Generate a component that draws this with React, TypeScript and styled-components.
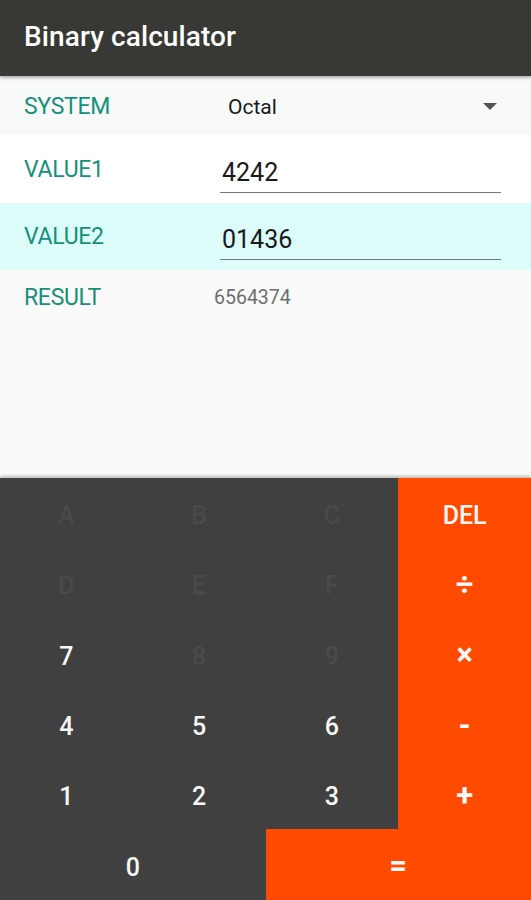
import styled, { createGlobalStyle } from "styled-components";

const GlobalStyle = createGlobalStyle`
  html, body {
    margin: 0;
    padding: 0;
    background: #fafafa;
    font-family: Roboto, "Noto Sans", "Liberation Sans", sans-serif;
  }
`;

type KeyKind = "num" | "off" | "op" | "sym";
type KeyDef = { label: string; kind: KeyKind; span?: number };

const keys: KeyDef[] = [
  { label: "A", kind: "off" },
  { label: "B", kind: "off" },
  { label: "C", kind: "off" },
  { label: "DEL", kind: "op" },
  { label: "D", kind: "off" },
  { label: "E", kind: "off" },
  { label: "F", kind: "off" },
  { label: "÷", kind: "sym" },
  { label: "7", kind: "num" },
  { label: "8", kind: "off" },
  { label: "9", kind: "off" },
  { label: "×", kind: "sym" },
  { label: "4", kind: "num" },
  { label: "5", kind: "num" },
  { label: "6", kind: "num" },
  { label: "-", kind: "sym" },
  { label: "1", kind: "num" },
  { label: "2", kind: "num" },
  { label: "3", kind: "num" },
  { label: "+", kind: "sym" },
  { label: "0", kind: "num", span: 2 },
  { label: "=", kind: "sym", span: 2 },
];

const App = () => {
  return (
    <Screen>
      <GlobalStyle />
      <AppBar>Binary calculator</AppBar>
      <Form>
        <Row $height={57} $bg="#f8f9f9">
          <Label>SYSTEM</Label>
          <Select>
            <span>Octal</span>
            <Arrow />
          </Select>
        </Row>
        <Row $height={68} $bg="#ffffff">
          <Label>VALUE1</Label>
          <Field>4242</Field>
        </Row>
        <Row $height={67} $bg="#dbfcf9">
          <Label>VALUE2</Label>
          <Field>01436</Field>
        </Row>
        <Row $height={54} $bg="transparent">
          <Label>RESULT</Label>
          <Result>6564374</Result>
        </Row>
      </Form>
      <Keypad>
        {keys.map((k) => (
          <Key key={k.label} $kind={k.kind} $span={k.span ?? 1}>
            {k.label}
          </Key>
        ))}
      </Keypad>
    </Screen>
  );
};

export default App;

const Screen = styled.div`
  display: flex;
  flex-direction: column;
  width: 531px;
  height: 900px;
  overflow: hidden;
`;

const AppBar = styled.header`
  height: 73px;
  display: flex;
  align-items: center;
  padding: 0 24px 3px;
  background: #383835;
  color: #ffffff;
  font-size: 28px;
  font-weight: 500;
  letter-spacing: 0.1px;
  box-shadow: 0 2px 3px rgba(0, 0, 0, 0.3);
  position: relative;
  z-index: 1;
`;

const Form = styled.main`
  flex: 1;
  padding-top: 2px;
  background: #fafafa;
`;

const Row = styled.div<{ $height: number; $bg: string }>`
  height: ${(p) => p.$height}px;
  background: ${(p) => p.$bg};
  display: flex;
  align-items: center;
  padding: 0 30px 0 24px;
`;

const Label = styled.div`
  width: 196px;
  color: #16907c;
  font-size: 23px;
  letter-spacing: -0.3px;
`;

const Select = styled.div`
  flex: 1;
  display: flex;
  align-items: center;
  justify-content: space-between;
  padding-left: 8px;
  padding-right: 4px;
  font-size: 21px;
  color: #1a1a1a;
`;

const Arrow = styled.span`
  width: 0;
  height: 0;
  border-left: 7px solid transparent;
  border-right: 7px solid transparent;
  border-top: 7px solid #555555;
`;

const Field = styled.div`
  flex: 1;
  align-self: flex-end;
  margin-bottom: 10px;
  padding: 0 0 5px 2px;
  border-bottom: 1.5px solid #777777;
  font-size: 25px;
  color: #1a1a1a;
`;

const Result = styled.div`
  margin-left: -6px;
  font-size: 19.5px;
  color: #6e6e6e;
`;

const Keypad = styled.section`
  display: grid;
  grid-template-columns: repeat(4, 1fr);
  grid-auto-rows: 70.3px;
  height: 422px;
  box-shadow: 0 -2px 3px rgba(0, 0, 0, 0.25);
  position: relative;
`;

const Key = styled.div<{ $kind: KeyKind; $span: number }>`
  grid-column: span ${(p) => p.$span};
  display: flex;
  align-items: center;
  justify-content: center;
  padding-top: ${(p) => (p.$kind === "sym" ? "2px" : "5px")};
  background: ${(p) =>
    p.$kind === "op" || p.$kind === "sym" ? "#ff4a00" : "#404040"};
  color: ${(p) => (p.$kind === "off" ? "#4a4a4a" : "#f7f7f7")};
  font-size: ${(p) => (p.$kind === "sym" ? "31px" : "25px")};
  font-weight: ${(p) => (p.$kind === "sym" ? 700 : 500)};
  user-select: none;
`;
